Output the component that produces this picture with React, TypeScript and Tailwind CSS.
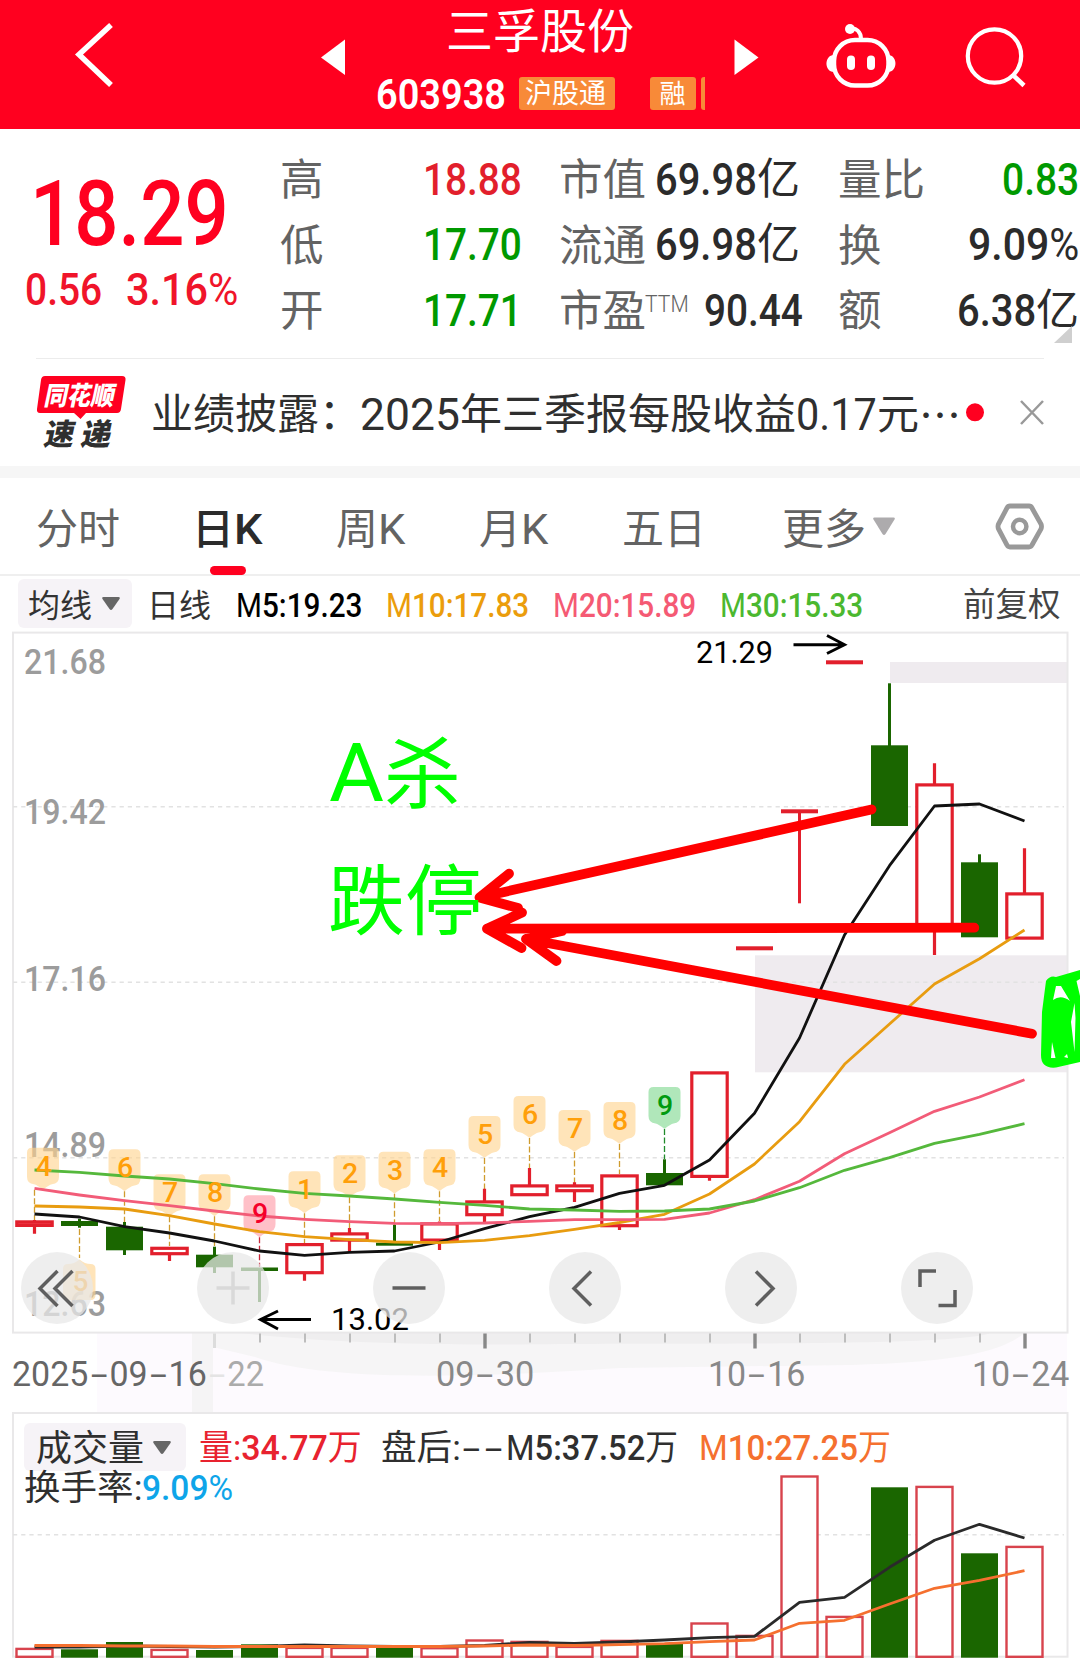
import React, { useLayoutEffect, useRef } from 'react';

const RED = '#e21f2c';
const GREEN = '#1a6600';
const STEP = 45;
const X0 = 34.5;

const cx = (i: number) => X0 + i * STEP;

// [up, top, bottom, high, low]
type Candle = [boolean, number, number, number, number];

const candles: Candle[] = [
  [true, 1220.3, 1227, 1220, 1233.7],
  [false, 1221, 1226, 1218.7, 1227.7],
  [false, 1226.7, 1250.3, 1222, 1255],
  [true, 1246.7, 1255.3, 1247, 1261],
  [false, 1254.7, 1267.3, 1246.7, 1273],
  [false, 1267.5, 1271, 1268, 1302],
  [true, 1243, 1274.3, 1243, 1280.7],
  [true, 1232.3, 1241.7, 1228, 1252],
  [false, 1242.7, 1245.7, 1224.7, 1245],
  [true, 1222.3, 1241.7, 1221.5, 1250],
  [true, 1200.3, 1216.3, 1188.7, 1222.7],
  [true, 1184.3, 1196.3, 1168, 1196],
  [true, 1184.3, 1192.3, 1182.3, 1202],
  [true, 1174.3, 1227.3, 1175, 1230],
  [false, 1173, 1185.3, 1159.3, 1185],
  [true, 1071.3, 1178, 1072, 1180.7],
  [true, 946.3, 950.3, 947, 949],
  [true, 809.3, 813.3, 810, 903.3],
  [true, 660.3, 664.3, 661, 663],
  [false, 745.3, 826, 683.3, 826],
  [true, 783.3, 929, 763.3, 955],
  [false, 862.3, 937.3, 854.3, 937],
  [true, 892.3, 939.7, 848.3, 939],
];

const ma5 = [1214, 1217, 1226.7, 1233, 1241, 1251, 1255.3, 1252.3, 1251, 1242, 1228.7, 1216.7, 1207.3, 1193.3, 1185.3, 1160, 1113.3, 1038, 935, 865.7, 806, 804, 821];
const ma10 = [1206, 1207, 1209, 1215.7, 1224, 1231.7, 1236.7, 1239.7, 1242, 1242.7, 1240.3, 1235.7, 1229.3, 1222.5, 1214.3, 1194, 1164, 1121.7, 1064.3, 1024, 984, 958.7, 930];
const ma20 = [1188.3, 1195, 1200.7, 1205.7, 1211, 1216, 1219.3, 1221.7, 1223.3, 1223.7, 1223, 1221.3, 1219.7, 1219.7, 1219.3, 1213, 1199.7, 1181.3, 1153.7, 1132.7, 1111.3, 1097, 1079.7];
const ma30 = [1170, 1172.3, 1176, 1179, 1183.7, 1189, 1193.3, 1196, 1199, 1202.3, 1205.3, 1209, 1210, 1211.3, 1211, 1209, 1201, 1187.7, 1170.3, 1157.7, 1143.3, 1134.3, 1123.7];

// [candle index, x centre, top, label, dash end]
const tags: [number, number, number, string, number][] = [
  [0, 43, 1147.7, '4', 1220],
  [2, 124.5, 1149.3, '6', 1222],
  [3, 169.5, 1174.3, '7', 1246],
  [4, 214.5, 1174.3, '8', 1246],
  [5, 259.5, 1195.3, '9', 1267],
  [6, 304.5, 1171.3, '1', 1243],
  [7, 349.5, 1155.3, '2', 1228],
  [8, 394.5, 1151.7, '3', 1225],
  [9, 439.5, 1149.3, '4', 1221],
  [10, 484.5, 1116, '5', 1189],
  [11, 529.5, 1096, '6', 1168],
  [12, 574.5, 1110, '7', 1183],
  [13, 619.5, 1102, '8', 1174],
  [14, 664.5, 1087, '9', 1159],
];

const volumes: [boolean, number][] = [
  [true, 1647.7], [false, 1649.3], [false, 1642], [true, 1648.7], [false, 1650], [false, 1644.3],
  [true, 1646.7], [true, 1646.7], [false, 1647.7], [true, 1647], [true, 1639.3], [true, 1640.7],
  [true, 1645.7], [true, 1639.7], [false, 1644], [true, 1622.3], [true, 1634.7], [true, 1475.3],
  [true, 1615.7], [false, 1487.3], [true, 1485.7], [false, 1553.3], [true, 1545.7],
];
const vol5 = [1647, 1647, 1646, 1646.5, 1647, 1646.5, 1645, 1646, 1646.5, 1646.5, 1645.5, 1642.3, 1643.3, 1642, 1640, 1637.7, 1636.3, 1602.3, 1597.3, 1567.3, 1540.3, 1524.3, 1538];
const vol10 = [1645.5, 1645.5, 1646, 1646, 1646.5, 1646.5, 1646.5, 1646.5, 1646.5, 1646.5, 1646, 1645, 1645.5, 1644.7, 1643.7, 1641.7, 1640, 1623.3, 1620.3, 1604, 1588.3, 1580.3, 1570.7];

const points = (ys: number[]) => ys.map((y, i) => `${cx(i)},${y}`).join(' ');

const tagColors = (i: number) => {
  if (i === 5) return { fill: '#ff9aa6', text: '#f5002a', dash: '#c8283c' };
  if (i === 14) return { fill: '#7fd88f', text: '#009a10', dash: '#1f8a2a' };
  return { fill: '#ffd48e', text: '#ff9f0a', dash: '#cf9c2e' };
};

// Squeezes its text horizontally so that it fills the width of the box
const Fit = ({ className = '', children }: { className?: string; children: React.ReactNode }) => {
  const box = useRef<HTMLDivElement>(null);
  const text = useRef<HTMLSpanElement>(null);
  useLayoutEffect(() => {
    if (box.current && text.current) {
      const scale = box.current.clientWidth / text.current.offsetWidth;
      text.current.style.transform = `scaleX(${scale})`;
    }
  }, []);
  return (
    <div ref={box} className={`shrink-0 leading-none ${className}`}>
      <span ref={text} className="block w-max origin-left whitespace-nowrap">{children}</span>
    </div>
  );
};

const Header = () => (
  <header className="flex h-[129px] shrink-0 bg-[#ff001f] text-white">
    <svg className="h-[129px] w-[376px] shrink-0" viewBox="0 0 376 129" fill="none">
      <path d="M111 25 L79 54.5 L111 85" stroke="#fff" strokeWidth="5.500" />
      <path d="M321 57.5 L345 39.5 V75 Z" fill="#fff" />
    </svg>
    <div className="flex w-[329px] shrink-0 flex-col">
      <h1 className="mt-[8px] ml-[70px] text-[47px] leading-none whitespace-nowrap">三孚股份</h1>
      <div className="mt-[22px] flex h-[33px] items-center">
        <Fit className="w-[130px] pt-[2px] text-[42px] font-semibold">603938</Fit>
        <span className="ml-[13px] flex h-[33px] w-[96px] shrink-0 items-center justify-center rounded-[3px] bg-[#f88a38] pr-[3px] pt-px text-[27px] leading-none">沪股通</span>
        <span className="ml-[35px] flex h-[33px] w-[46px] shrink-0 items-center justify-center rounded-[3px] bg-[#f88a38] pr-px text-[26px] leading-none">融</span>
        <span className="ml-[5px] h-[33px] w-[4px] shrink-0 rounded-l-[3px] bg-[#f88a38]" />
      </div>
    </div>
    <svg className="h-[129px] w-[375px] shrink-0" viewBox="705 0 375 129" fill="none">
      <path d="M734.5 39.5 L758.5 57.5 L734.5 75 Z" fill="#fff" />
      <g stroke="#fff">
        <rect x="834" y="40" width="54.500" height="45.500" rx="21" strokeWidth="4.500" />
        <path d="M850 29 C856 27 861 32 861 39" strokeWidth="4" />
      </g>
      <g fill="#fff">
        <circle cx="850" cy="29" r="5" />
        <path d="M834 55 C824 55 824 72 834 72 Z M888 55 C898 55 898 72 888 72 Z" />
        <rect x="847" y="55.500" width="8" height="14.500" rx="4" />
        <rect x="867" y="55.500" width="8" height="14.500" rx="4" />
      </g>
      <circle cx="994.500" cy="56" r="26.700" stroke="#fff" strokeWidth="4.200" />
      <path d="M1013 75 L1024 85.500" stroke="#fff" strokeWidth="4.500" />
    </svg>
  </header>
);

const label = 'flex h-full items-center pt-[4px] text-[43.5px] leading-none text-[#636363] whitespace-nowrap';

const Quote = () => (
  <section className="relative flex h-[229px] shrink-0 text-[#2b2b2b]">
    <div className="flex w-[280px] shrink-0 flex-col text-[#ff0020]">
      <Fit className="mt-[41px] ml-[30px] w-[199px] text-[90px] font-medium">18.29</Fit>
      <div className="mt-[8px] flex text-[44px] font-medium text-[#f0142a]">
        <Fit className="ml-[25px] w-[77px]">0.56</Fit>
        <Fit className="ml-[24px] w-[112px]">3.16<span className="font-normal">%</span></Fit>
      </div>
    </div>
    <div className="mt-[17px] flex h-[197px] w-[279px] shrink-0 flex-col font-medium">
      {[['高', '18.88', 'text-[#e21f2c]'], ['低', '17.70', 'text-[#009900]'], ['开', '17.71', 'text-[#009900]']].map(([name, value, color]) => (
        <div key={name} className="flex h-[65.6px] items-center">
          <span className={`${label} w-[143px] font-normal`}>{name}</span>
          <Fit className={`w-[99px] pt-px text-[45px] ${color}`}>{value}</Fit>
        </div>
      ))}
    </div>
    <div className="mt-[17px] flex h-[197px] w-[279px] shrink-0 flex-col">
      {['市值', '流通'].map((name) => (
        <div key={name} className="flex h-[65.6px] items-center">
          <span className={`${label} w-[96px]`}>{name}</span>
          <Fit className="w-[102px] pt-px text-[45px] font-medium">69.98</Fit>
          <span className="pt-px text-[43px] leading-none">亿</span>
        </div>
      ))}
      <div className="flex h-[65.6px] items-center">
        <span className={`${label} w-[86px]`}>市盈</span>
        <Fit className="mt-[-12px] w-[44px] text-[24px] font-light text-[#636363]">TTM</Fit>
        <Fit className="ml-[15px] w-[99px] pt-px text-[45px] font-medium">90.44</Fit>
      </div>
    </div>
    <div className="mt-[17px] flex h-[197px] w-[241px] shrink-0 flex-col">
      <div className="flex h-[65.6px] items-center justify-between">
        <span className={label}>量比</span>
        <Fit className="w-[77px] pt-px text-[45px] font-medium text-[#009900]">0.83</Fit>
      </div>
      <div className="flex h-[65.6px] items-center justify-between">
        <span className={label}>换</span>
        <Fit className="w-[111px] pt-px text-[45px] font-medium">9.09<span className="font-normal">%</span></Fit>
      </div>
      <div className="flex h-[65.6px] items-center">
        <span className={`${label} w-[119px]`}>额</span>
        <Fit className="w-[79px] pt-px text-[45px] font-medium">6.38</Fit>
        <span className="pt-px text-[43px] leading-none">亿</span>
      </div>
    </div>
    <svg className="absolute top-[197px] left-[1054px] h-[17px] w-[18px]" viewBox="0 0 18 17">
      <path d="M18 0 V17 H0 Z" fill="#cfcfcf" />
    </svg>
  </section>
);

const News = () => (
  <section className="flex h-[108px] shrink-0 text-[#2f2f2f]">
    <div className="ml-[36px] flex w-[115px] shrink-0 flex-col">
      <div className="relative mt-[17px] h-[38px] w-[90px]">
        <svg className="absolute top-0 left-0 h-[46px] w-[90px]" viewBox="0 0 90 46">
          <path d="M9 1 H86 Q90 1 89.500 5 L85 34 Q84.500 38 81 38 H50 L44.500 44 L38 38 H4 Q0.500 38 1 34 L5 5 Q5.500 1 9 1 Z" fill="#ff0020" />
        </svg>
        <Fit className="relative ml-[10px] w-[70px] -skew-x-12 pt-[8px] text-[26px] font-black text-white">同花顺</Fit>
      </div>
      <div className="mt-[7px] ml-[9px] flex w-[67px] -skew-x-12 justify-between text-[30px] leading-none font-black">
        <span>速</span>
        <span>递</span>
      </div>
    </div>
    <div className="flex grow items-center pt-[5px] text-[42px] leading-none whitespace-nowrap">
      <span className="w-[209px] shrink-0">业绩披露：</span>
      <Fit className="w-[100px] text-[44px]">2025</Fit>
      <span>年三季报每股收益</span>
      <Fit className="w-[81px] text-[44px]">0.17</Fit>
      <span>元</span>
      <span className="-mt-[4px] w-[42px] text-center font-['Noto_Sans_CJK_SC']">…</span>
    </div>
    <svg className="h-[108px] w-[117px] shrink-0" viewBox="963 358 117 108" fill="none">
      <circle cx="975" cy="412.300" r="9" fill="#ff0020" />
      <path d="M1021 401 L1043 424 M1043 401 L1021 424" stroke="#999" strokeWidth="2.500" />
    </svg>
  </section>
);

const Tabs = () => (
  <nav className="flex h-[98px] shrink-0 items-center border-b-2 border-[#efefef] pt-[7px] text-[42px] leading-none whitespace-nowrap text-[#636363]">
    <span className="ml-[36px] w-[156px]">分时</span>
    <span className="relative flex w-[144px] font-medium text-[#2b2b2b]">
      日<Fit className="w-[29px]">K</Fit>
      <span className="absolute top-[57px] left-[18px] h-[9px] w-[36px] rounded-full bg-[#ff0020]" />
    </span>
    <span className="flex w-[143px]">周<Fit className="w-[27px]">K</Fit></span>
    <span className="flex w-[143px]">月<Fit className="w-[27px]">K</Fit></span>
    <span className="w-[160px]">五日</span>
    <span className="w-[91px]">更多</span>
    <svg className="mt-[-6px] h-[50px] w-[180px]" viewBox="873 502 180 50" fill="none">
      <path d="M874.500 517.500 H893.500 Q895.500 517.500 894.500 519.500 L885.500 534 Q884 536 882.500 534 L873.500 519.500 Q872.500 517.500 874.500 517.500 Z" fill="#adabad" />
      <path d="M1010 506 H1029 Q1031 506 1032 508 L1041 524 Q1042 526.500 1041 529 L1032 545 Q1031 547 1029 547 H1010 Q1008 547 1007 545 L998.500 529 Q997.500 526.500 998.500 524 L1007 508 Q1008 506 1010 506 Z" stroke="#999" strokeWidth="4.800" />
      <circle cx="1019.700" cy="526.500" r="6.700" stroke="#999" strokeWidth="4.500" />
    </svg>
  </nav>
);

const Caret = () => (
  <svg className="h-[13px] w-[18px] shrink-0" viewBox="0 0 18 13">
    <path d="M1.500 0 H16.500 Q18.500 0 17.500 2 L10.500 12 Q9 14 7.500 12 L0.500 2 Q-0.500 0 1.500 0 Z" fill="#666" />
  </svg>
);

const Legend = () => (
  <div className="flex h-[55px] shrink-0 items-center text-[32px] leading-none whitespace-nowrap">
    <div className="ml-[18px] flex h-[49px] w-[114px] items-center justify-between rounded-[6px] bg-[#f6f3f7] px-[10px] pr-[12px] text-[#333]">
      <span className="pt-[4px]">均线</span>
      <Caret />
    </div>
    <span className="ml-[15px] w-[89px] pt-[4px] text-[#333]">日线</span>
    <Fit className="w-[126px] pt-[4px] text-[33px] text-black">M<b className="font-medium">5:19.23</b></Fit>
    <Fit className="ml-[24px] w-[143px] pt-[4px] text-[33px] text-[#eb9d0c]">M<b className="font-medium">10:17.83</b></Fit>
    <Fit className="ml-[24px] w-[143px] pt-[4px] text-[33px] text-[#f55a74]">M<b className="font-medium">20:15.89</b></Fit>
    <Fit className="ml-[24px] w-[143px] pt-[4px] text-[33px] text-[#4bb82f]">M<b className="font-medium">30:15.33</b></Fit>
    <span className="ml-[100px] pt-[4px] text-[32.5px] text-[#444]">前复权</span>
  </div>
);

const tagShape = (x: number, y: number) =>
  `M${x - 11} ${y} h22 q5 0 5 5 v24 q0 7 -7 7.500 q-3 0.500 -9 5.500 q-6 -5 -9 -5.500 q-7 -0.500 -7 -7.500 v-24 q0 -5 5 -5 Z`;

const Candles = () => (
  <g>
    {candles.map(([up, top, bottom, high, low], i) => {
      const x = cx(i);
      const color = up ? RED : GREEN;
      if (!up || bottom - top < 5) {
        return (
          <g key={i} fill={color}>
            <rect x={x - 1.5} y={high} width="3" height={low - high} />
            <rect x={x - 18.5} y={top} width="37" height={bottom - top} />
          </g>
        );
      }
      return (
        <g key={i}>
          <path d={`M${x} ${high} V${top + 1} M${x} ${bottom - 1} V${low}`} stroke={color} strokeWidth="3.200" />
          <rect x={x - 17.7} y={top + 1.6} width="35.400" height={bottom - top - 3.2} fill={bottom - top < 8 ? '#ff5a64' : '#fff'} stroke={color} strokeWidth="3.200" />
        </g>
      );
    })}
  </g>
);

const Price = ({ x, y, w, size, fill, children }: { x: number; y: number; w: number; size: number; fill: string; children: string }) => (
  <text x={x} y={y} textLength={w} lengthAdjust="spacingAndGlyphs" fontSize={size} fill={fill}>{children}</text>
);

const KLine = () => (
  <svg className="h-[781px] w-[1080px]" viewBox="0 631 1080 781" fill="none">
    {/* wash under the time axis */}
    <rect x="97" y="1333" width="970" height="79" fill="#fdfafe" />
    <path d="M213 1333 H1025 C1000 1352 960 1362 850 1365 L620 1368 C500 1376 330 1384 255 1357 L213 1347 Z" fill="#f6f5f6" />
    <rect x="192" y="1333" width="21" height="79" fill="#f5f4f5" />
    <path d="M240 1333 H990 C960 1346 700 1343 560 1344 C420 1346 320 1342 240 1333 Z" fill="#efeeef" />

    <rect x="890" y="662" width="177" height="21" fill="#efebef" />
    <rect x="755" y="955.300" width="312" height="117" fill="#efebef" />
    <rect x="13" y="632.600" width="1054.500" height="700" stroke="#e9e8e9" strokeWidth="2" />
    <path d="M13 806.700 H1064 M13 982.300 H1064 M13 1157.700 H1064" stroke="#e2e2e2" strokeWidth="1.600" strokeDasharray="4.200 4" />

    <g stroke="#bdbdbd" strokeWidth="2">
      {[5, 6, 7, 8, 9, 11, 12, 13, 14, 15, 17, 18, 19, 20, 21].map((i) => (
        <path key={i} d={`M${cx(i) + 0.5} 1333.500 v9`} />
      ))}
    </g>
    <path d="M214.500 1333.500 v14.500" stroke="#dcdcdc" strokeWidth="3" />
    <path d="M485 1333.500 v15 M755 1333.500 v15 M1025 1333.500 v15" stroke="#888" strokeWidth="3.400" />

    <g fontWeight="500">
      <Price x={24} y={674} w={82} size={35} fill="#9c9c9c">21.68</Price>
      <Price x={24} y={824} w={82} size={35} fill="#9c9c9c">19.42</Price>
      <Price x={24} y={990.5} w={82} size={35} fill="#9c9c9c">17.16</Price>
      <Price x={24} y={1157.3} w={82} size={35} fill="#9c9c9c">14.89</Price>
      <Price x={24} y={1315.7} w={82} size={35} fill="#9c9c9c">12.63</Price>
    </g>

    {/* nine-turn markers */}
    <path d="M68 1264 q6 0 11.500 -4.500 q5.500 4.500 11 4.500 q5 0 5 5 v26 q0 5 -5 5 h-22.500 q-5 0 -5 -5 v-26 q0 -5 5 -5 Z" fill="#ffd48e" opacity="0.62" />
    <path d="M79.500 1229 V1258" stroke="#cf9c2e" strokeWidth="1.300" strokeDasharray="6 2.500" />
    <text x="80.500" y="1291" textAnchor="middle" fontSize="28" fontWeight="500" fill="#ff9f0a">5</text>
    {tags.map(([i, x, top, , end]) => (
      <g key={i}>
        <path d={tagShape(x, top)} fill={tagColors(i).fill} opacity="0.62" />
        <path d={`M${cx(i)} ${top + 42} V${end}`} stroke={tagColors(i).dash} strokeWidth="1.300" strokeDasharray="6 2.500" />
      </g>
    ))}

    <Candles />

    <g strokeWidth="2.800" strokeLinejoin="round">
      <polyline points={points(ma5)} stroke="#111" />
      <polyline points={points(ma10)} stroke="#e89c10" />
      <polyline points={points(ma20)} stroke="#f25c78" />
      <polyline points={points(ma30)} stroke="#55b83c" />
    </g>
    {tags.map(([i, x, top, text]) => (
      <text key={i} x={x + 0.7} y={top + 27.8} textAnchor="middle" fontSize="28.500" fontWeight="500" fill={tagColors(i).text}>{text}</text>
    ))}

    <path d="M793.500 644.700 H844 M827 635.500 L844.500 644.700 L827 653.500" stroke="#000" strokeWidth="2.900" />
    <Price x={696} y={663.3} w={77} size={31} fill="#000">21.29</Price>
    <path d="M311 1319.500 H260 M278 1311 L260.500 1319.500 L278 1329" stroke="#000" strokeWidth="2.900" />
    <Price x={331} y={1330.3} w={78} size={31} fill="#000">13.02</Price>

    {/* hand-drawn notes */}
    <g stroke="#ff0000" strokeWidth="9.800" strokeLinecap="round" strokeLinejoin="round">
      <path d="M871.500 809.500 L479.500 897.500 M509 873.700 L479.500 897.500 L518 908" />
      <path d="M974.300 927.700 L487 928.700 M522 912.500 L487 928.700 L521.500 948" />
      <path d="M1032 1033.700 L526 939 M556.500 961 L526 939 L562 931" />
    </g>
    <g fill="#00ff00" fontSize="77">
      <text x="329" y="800.700" fontSize="81" textLength="55" lengthAdjust="spacingAndGlyphs">A</text>
      <text x="384" y="802">杀</text>
      <text x="328" y="928.500">跌停</text>
    </g>
    <path d="M1046 981 Q1050 975 1056 977 L1080 970 V1062 L1056 1067.500 Q1041 1069 1041 1055 L1042 1012 Z" fill="#00ff00" />
    <path d="M1061 986 L1070 1001 Q1061 994 1053 1000 L1056 986 Z M1076.500 981 L1080 979 V996 Z M1074.500 1003 L1071 1022 L1074.500 1052 L1075.500 1018 Z M1052 1042 L1055.500 1058 H1051 Z M1064 1057 L1067 1054 L1068 1058 Z" fill="#fff" />
  </svg>
);

// Hyphen as wide as a digit
const Dash = () => <span className="inline-block w-[0.62em] scale-x-[1.8] text-center">-</span>;

const Dates = () => (
  <div className="absolute top-[726px] left-0 flex w-[1080px] text-[35px] text-[#888]">
    <Fit className="ml-[12px] w-[195px] text-[#666]">2025<Dash />09<Dash />16</Fit>
    <Fit className="w-[57px] text-[#ababab]"><span className="text-[#e4e4e4]"><Dash /></span>22</Fit>
    <Fit className="ml-[172px] w-[98px]">09<Dash />30</Fit>
    <Fit className="ml-[174px] w-[97px]">10<Dash />16</Fit>
    <Fit className="ml-[167px] w-[97px]">10<Dash />24</Fit>
  </div>
);

const Round = ({ children }: { children: React.ReactNode }) => (
  <span className="h-[72px] w-[72px] rounded-full bg-[#e8e8e8]/[0.74]">
    <svg className="h-[72px] w-[72px]" viewBox="-36 -36 72 72" fill="none" stroke="#5f5f5f" strokeWidth="3.500">{children}</svg>
  </span>
);

const Volume = () => (
  <svg className="h-[253px] w-[1080px]" viewBox="0 1412 1080 253" fill="none">
    <rect x="13" y="1413" width="1054.500" height="243.700" stroke="#e9e8e9" strokeWidth="2" />
    <path d="M13 1534.700 H1064" stroke="#e2e2e2" strokeWidth="1.600" strokeDasharray="4.200 4" />
    {volumes.map(([up, top], i) =>
      up ? (
        <rect key={i} x={cx(i) - 18} y={top + 1.2} width="36" height={1656.8 - top - 1.2} fill="#fff" stroke="#d8434d" strokeWidth="2.400" />
      ) : (
        <rect key={i} x={cx(i) - 18.5} y={top} width="37" height={1657.7 - top} fill={GREEN} />
      ),
    )}
    <g strokeWidth="2.800" strokeLinejoin="round">
      <polyline points={points(vol5)} stroke="#2a2a2a" />
      <polyline points={points(vol10)} stroke="#f5702f" />
    </g>
  </svg>
);

export default function App() {
  return (
    <main className="flex h-[1665px] w-[1080px] flex-col overflow-hidden bg-white font-['Roboto','Noto_Sans_CJK_SC',sans-serif]">
      <Header />
      <Quote />
      <div className="mx-[36px] h-px shrink-0 bg-[#ececec]" />
      <div className="-mt-px shrink-0"><News /></div>
      <div className="h-[12px] shrink-0 bg-[#f6f6f6]" />
      <Tabs />
      <Legend />

      <section className="relative h-[781px] shrink-0">
        <KLine />
        <Dates />
        <div className="absolute top-[621px] left-[21px] flex gap-[104px]">
          <Round><path d="M0.500 -17 L-17 0.500 L0.500 18 M15.500 -17 L-2 0.500 L15.500 18" /></Round>
          <Round><path d="M-16.500 0 H16.500 M0 -16.500 V16.500" stroke="#d9d9d9" /></Round>
          <Round><path d="M-16.500 0 H16.500" /></Round>
          <Round><path d="M6 -16.500 L-11 0.500 L6 17.500" /></Round>
          <Round><path d="M-5 -16.500 L12 0.500 L-5 17.500" /></Round>
          <Round><path d="M-17 -1 V-17 H-1 M18 2 V17.500 H1.500" /></Round>
        </div>
      </section>

      <section className="relative h-[253px] shrink-0">
        <Volume />
        <div className="absolute top-[11px] left-[24px] text-[35px] leading-none whitespace-nowrap text-[#2f2f2f]">
          <div className="flex h-[48px] items-center">
            <div className="flex h-[48px] w-[162px] shrink-0 items-center justify-between rounded-[6px] bg-[#f6f3f7] pr-[15px] pl-[12px]">
              <Fit className="w-[108px] pt-[4px] text-[36px]">成交量</Fit>
              <Caret />
            </div>
            <Fit className="ml-[13px] w-[163px] pt-[3px] text-[#e8222f]">量:<b className="font-medium">34.77</b>万</Fit>
            <Fit className="ml-[19px] w-[124px] pt-[3px]">盘后:<Dash /><Dash /></Fit>
            <Fit className="ml-[1px] w-[172px] pt-[3px]">M<b className="font-medium">5:37.52</b>万</Fit>
            <Fit className="ml-[21px] w-[192px] pt-[3px] text-[#f5702f]">M<b className="font-medium">10:27.25</b>万</Fit>
          </div>
          <div className="flex h-[35px] items-center">
            <Fit className="w-[118px]">换手率:</Fit>
            <Fit className="w-[91px] text-[#0ea5e9]"><b className="font-medium">9.09</b>%</Fit>
          </div>
        </div>
      </section>
    </main>
  );
}
